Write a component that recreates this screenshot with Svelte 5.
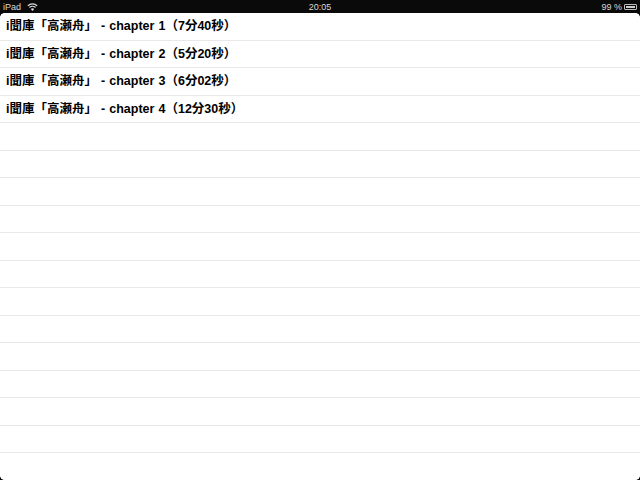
<script>
	let chapters = [
		'i聞庫「高瀬舟」 - chapter 1（7分40秒）',
		'i聞庫「高瀬舟」 - chapter 2（5分20秒）',
		'i聞庫「高瀬舟」 - chapter 3（6分02秒）',
		'i聞庫「高瀬舟」 - chapter 4（12分30秒）'
	];
	let blanks = Array(13).fill('');
</script>

<div class="screen">
	<div class="status">
		<div class="left">
			<span>iPad</span>
			<svg width="11" height="8" viewBox="0 0 11 8">
				<path d="M0.8 2.8 A6.6 6.6 0 0 1 10.2 2.8" fill="none" stroke="#ddd" stroke-width="1.2" />
				<path d="M2.5 4.5 A4.2 4.2 0 0 1 8.5 4.5" fill="none" stroke="#ddd" stroke-width="1.2" />
				<path d="M5.5 8 L3.8 6 A2.4 2.4 0 0 1 7.2 6 Z" fill="#ddd" />
			</svg>
		</div>
		<div class="time">20:05</div>
		<div class="right">
			<span>99 %</span>
			<div class="battery"><div class="charge"></div></div>
		</div>
	</div>

	<div class="list">
		{#each chapters as chapter}
			<div class="row">{chapter}</div>
		{/each}
		{#each blanks as blank}
			<div class="row">{blank}</div>
		{/each}
	</div>

	<div class="corner tl"></div>
	<div class="corner tr"></div>
	<div class="corner bl"></div>
	<div class="corner br"></div>
</div>

<style>
	:global(body) {
		margin: 0;
		background: #fff;
	}

	.screen {
		position: relative;
		width: 640px;
		height: 480px;
		overflow: hidden;
		background: #fff;
		font-family: "Liberation Sans", "Noto Sans CJK JP", sans-serif;
	}

	.status {
		display: grid;
		grid-template-columns: 1fr auto 1fr;
		align-items: center;
		height: 13px;
		padding: 0 3px;
		background: #0a0a0a;
		color: #d8d8d8;
		font-size: 9px;
		line-height: 12px;
	}

	.left {
		display: flex;
		align-items: center;
		gap: 6px;
	}

	.right {
		display: flex;
		justify-content: flex-end;
		align-items: center;
		gap: 2px;
	}

	.battery {
		width: 13px;
		height: 6px;
		padding: 1px;
		border: 1px solid #bbb;
		border-radius: 1px;
		box-sizing: border-box;
		display: flex;
	}

	.charge {
		flex: 1;
		background: #ccc;
	}

	.list {
		display: flex;
		flex-direction: column;
	}

	.row {
		box-sizing: border-box;
		height: 27.5px;
		flex: none;
		padding-left: 6px;
		border-bottom: 1px solid #e8e8e8;
		color: #000;
		font-size: 12.5px;
		font-weight: 700;
		line-height: 26.5px;
		word-spacing: 0.6px;
		white-space: pre;
	}

	.corner {
		position: absolute;
		width: 4px;
		height: 4px;
	}

	.tl {
		top: 13px;
		left: 0;
		background: radial-gradient(circle at 100% 100%, transparent 3.5px, #0a0a0a 4px);
	}

	.tr {
		top: 13px;
		right: 0;
		background: radial-gradient(circle at 0 100%, transparent 3.5px, #0a0a0a 4px);
	}

	.bl {
		bottom: 0;
		left: 0;
		background: radial-gradient(circle at 100% 0, transparent 3.5px, #0a0a0a 4px);
	}

	.br {
		bottom: 0;
		right: 0;
		background: radial-gradient(circle at 0 0, transparent 3.5px, #0a0a0a 4px);
	}
</style>
